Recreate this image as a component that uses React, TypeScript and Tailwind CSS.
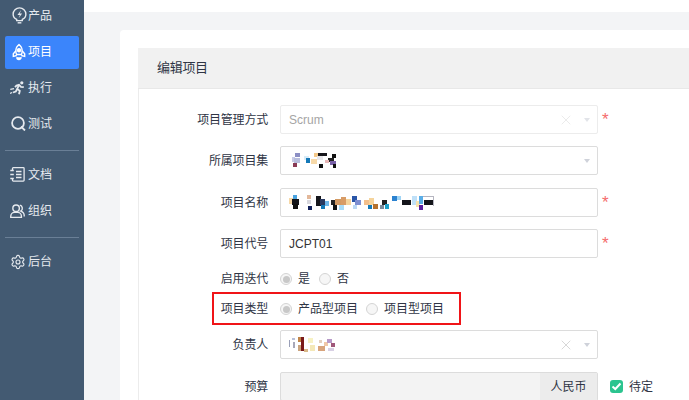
import React from "react";
import { Settings, X } from "lucide-react";

type Cell = [number, number, number, number, string];

const Mosaic = ({ w, h, cells }: { w: number; h: number; cells: Cell[] }) => (
  <svg width={w} height={h} viewBox={`0 0 ${w} ${h}`} className="block shrink-0" shapeRendering="crispEdges">
    {cells.map((c, i) => (
      <rect key={i} x={c[0]} y={c[1]} width={c[2]} height={c[3]} fill={c[4]} />
    ))}
  </svg>
);

const m1: Cell[] = [
  [6, 0, 5, 4, "#8c8fc4"], [3, 4, 3, 5, "#c9cde8"], [5, 5, 6, 5, "#b8bedd"], [4, 10, 4, 4, "#8a3a55"],
  [15, 3, 5, 4, "#d9ecf8"], [17, 5, 4, 5, "#1479b8"], [22, 6, 6, 5, "#f7d9a8"], [25, 0, 5, 4, "#f5c98a"],
  [29, 0, 9, 3, "#16171c"], [28, 3, 6, 4, "#e8e8ec"], [30, 11, 4, 4, "#111"], [43, 1, 4, 4, "#111"],
  [39, 5, 6, 4, "#222"], [41, 8, 6, 4, "#7a62a8"], [44, 11, 3, 4, "#111"], [36, 7, 4, 3, "#e9b8b8"],
];
const m2: Cell[] = [
  [0, 3, 5, 6, "#f7d9a8"], [4, 0, 4, 4, "#4aa3df"], [3, 4, 7, 6, "#14151a"], [4, 9, 5, 5, "#111"],
  [18, 0, 4, 4, "#e3b89a"], [18, 5, 4, 4, "#d7d7dd"], [19, 11, 4, 4, "#10205a"],
  [27, 1, 5, 10, "#16171c"], [31, 4, 5, 6, "#2a3a60"], [36, 6, 4, 5, "#70b8ea"], [32, 10, 4, 4, "#1479b8"],
  [42, 5, 5, 5, "#222"], [44, 9, 4, 6, "#111"], [46, 4, 7, 6, "#d39a63"], [52, 2, 5, 8, "#d89c66"], [50, 10, 5, 5, "#a8dcf8"],
  [57, 4, 5, 6, "#f5d49c"], [63, 1, 5, 6, "#2a56a8"], [66, 5, 6, 5, "#7e8ed0"], [64, 10, 4, 4, "#bcd8f4"],
  [75, 5, 6, 5, "#f3bf8c"], [80, 3, 5, 7, "#f5d49c"], [79, 10, 4, 4, "#1479b8"], [84, 9, 5, 5, "#b5722e"],
  [93, 5, 5, 5, "#222"], [96, 9, 4, 5, "#1da0c8"], [91, 10, 4, 4, "#7a8a9a"],
  [103, 1, 5, 5, "#2b82d0"], [108, 1, 4, 4, "#9fd4f5"], [113, 5, 9, 5, "#14151a"],
  [123, 1, 5, 9, "#bfe0f8"], [127, 6, 4, 6, "#f7e2b0"], [130, 1, 4, 8, "#5aaee8"], [130, 10, 4, 5, "#5a1fa0"],
  [134, 1, 10, 1, "#b5b5c0"], [135, 5, 10, 5, "#14151a"], [144, 1, 1, 10, "#b5b5c0"],
];
const m3: Cell[] = [
  [0, 3, 1, 7, "#9aa0b8"], [3, 1, 3, 2, "#b8c0d8"], [4, 5, 2, 6, "#a8a8b8"], [9, 0, 3, 5, "#c08448"], [12, 0, 3, 14, "#7a1a1a"], [9, 8, 3, 6, "#caa47e"],
  [15, 12, 4, 3, "#d9b888"], [19, 1, 5, 5, "#f7f2c4"], [21, 8, 5, 6, "#f4e8b8"], [30, 3, 3, 3, "#e3d0c0"], [29, 9, 7, 5, "#d8a47c"], [35, 5, 4, 4, "#f0c8a8"],
  [38, 2, 5, 4, "#b79ac8"], [42, 6, 4, 4, "#a0587a"], [39, 11, 6, 3, "#d8d0e4"],
];

const BulbIcon = () => (
  <svg width="15" height="17" viewBox="0 0 16 18" fill="none" stroke="currentColor" strokeWidth="1.500" className="block shrink-0 ml-[2px]">
    <path d="M5 13.200C2.700 12.100 1.200 10 1.200 7.700a6.800 6.800 0 0 1 13.600 0c0 2.300-1.500 4.400-3.800 5.500v1.300H5z" />
    <path d="M6 16.800h4" />
    <path d="M9.800 3.200 5.800 8.400h2.600l-1.400 3.400 3.800-5H8.200z" fill="currentColor" stroke="none" />
  </svg>
);
const RocketIcon = () => (
  <svg width="14" height="18" viewBox="0 0 16 19" fill="none" stroke="currentColor" strokeWidth="1.600" className="block shrink-0 ml-[2px]">
    <path d="M8 1C5.400 3 4.400 5.800 4.400 8.400c0 1.500.3 2.800.8 4h5.600c.5-1.200.8-2.500.8-4C11.600 5.800 10.600 3 8 1z" />
    <path d="M4.500 8 1.500 11.500 1.500 14.500 5.500 13.500M11.500 8l3 3.500v3l-4-1" />
    <circle cx="8" cy="7.500" r="1.700" fill="currentColor" />
    <path d="M5.500 15.500a2.500 2.500 0 0 0 5 0" fill="currentColor" />
  </svg>
);
const RunnerIcon = () => (
  <svg width="15" height="14" viewBox="0 0 15 14" fill="none" stroke="currentColor" strokeWidth="1.800" className="block shrink-0">
    <circle cx="11.800" cy="1.800" r="1.600" fill="currentColor" stroke="none" />
    <path d="M13.800 6.200 11 5.800 9 3.800 6.500 4.600 5 6.200" />
    <path d="M9 3.800 7.200 8 9.800 9.800 9 13.200" />
    <path d="M7.200 8 5.800 10.500 3 11.500" />
    <path d="M0.300 8.400 4 7.600M0 12.400 2.200 11.400" strokeWidth="1.100" />
  </svg>
);
const SearchIcon = () => (
  <svg width="15" height="15" viewBox="0 0 15 15" fill="none" stroke="currentColor" strokeWidth="1.800" className="block shrink-0 ml-[1px]">
    <circle cx="7" cy="7" r="5.900" />
    <path d="M10 10.500 14 14.500" />
  </svg>
);
const DocIcon = () => (
  <svg width="15" height="15" viewBox="0 0 15 15" fill="none" stroke="currentColor" strokeWidth="1.300" className="block shrink-0">
    <path d="M2.500 3V1.500a.8.8 0 0 1 .8-.8h10a.8.8 0 0 1 .8.800v11.800a.8.8 0 0 1-.8.800h-10a.8.8 0 0 1-.8-.8V12" />
    <path d="M.3 3.500h3.500M.3 7.500h3.500M.3 11.500h3.500M6 4.500h5.500M6 7.500h5.500M6 10.500h5.500" />
  </svg>
);
const UserIcon = () => (
  <svg width="15" height="14" viewBox="0 0 16 15" fill="none" stroke="currentColor" strokeWidth="1.500" className="block shrink-0">
    <circle cx="6.500" cy="4.500" r="3.500" />
    <path d="M.8 14.300v-1.300c0-2.400 2-4 4-4h3.400c2 0 4 1.600 4 4v1.300z" />
    <path d="M10.500 1.200a3.500 3.500 0 0 1 1 6.400c2 .7 3.700 2.600 3.700 4.900v.8" />
  </svg>
);

const Item = ({ icon, text, active }: { icon: React.ReactNode; text: string; active?: boolean }) => (
  <div
    className={`h-[33px] mb-[3px] pb-[2px] flex items-center pl-[5px] rounded-[2px] text-[12px] ${
      active ? "bg-[#3b85fb] text-white" : "text-[#e6eaef]"
    }`}
  >
    <span className="w-[18px] flex justify-start">{icon}</span>
    <span>{text}</span>
  </div>
);

const Row = ({ label, children, h = 29, mb = 12, star }: { label: string; children: React.ReactNode; h?: number; mb?: number; star?: boolean }) => (
  <div className="flex items-center" style={{ height: h, marginBottom: mb }}>
    <div className="w-[129px] text-right text-[12px] tracking-[-0.2px] text-[#2f3545] shrink-0">{label}</div>
    <div className="ml-[12px] flex items-center">
      {children}
      {star && <span className="ml-[4px] h-[14px] text-[#f56c6c] text-[17px] leading-[20px] font-['Liberation_Sans'] -translate-y-[3px]">*</span>}
    </div>
  </div>
);

const Caret = ({ light }: { light?: boolean }) => (
  <span className={`w-0 h-0 border-x-[3.500px] border-x-transparent border-t-[4px] ${light ? "border-t-[#e2e4e9]" : "border-t-[#cfd2da]"}`} />
);

const Box = ({ children, disabled, right }: { children?: React.ReactNode; disabled?: boolean; right?: React.ReactNode }) => (
  <div className={`w-[318px] h-[29px] rounded-[2px] border flex items-center pl-[8px] pr-[7px] bg-white ${disabled ? "border-[#ececec]" : "border-[#dcdcdc]"}`}>
    <div className="flex-1 flex items-center min-w-0">{children}</div>
    {right}
  </div>
);

const Clear = ({ light }: { light?: boolean }) => (
  <X size={16} strokeWidth={1.100} className={light ? "text-[#e4e4e4]" : "text-[#c8c8c8]"} />
);

const Radio = ({ on }: { on?: boolean }) => (
  <span className="w-[12px] h-[12px] rounded-full border border-[#d4d4d4] bg-[#f6f6f6] flex items-center justify-center shrink-0">
    {on && <span className="w-[7px] h-[7px] rounded-full bg-[#c8c8c8]" />}
  </span>
);

export default function App() {
  return (
    <div className="w-[689px] h-[400px] overflow-hidden flex bg-white font-['Liberation_Sans','Noto_Sans_CJK_SC',sans-serif]">
      <aside className="w-[84px] h-full bg-[#435a72] shrink-0 px-[5px]">
        <Item icon={<BulbIcon />} text="产品" />
        <Item icon={<RocketIcon />} text="项目" active />
        <Item icon={<RunnerIcon />} text="执行" />
        <Item icon={<SearchIcon />} text="测试" />
        <div className="h-px bg-[#6a7f96] mt-[9px] mb-[8px]" />
        <Item icon={<DocIcon />} text="文档" />
        <Item icon={<UserIcon />} text="组织" />
        <div className="h-px bg-[#6a7f96] mt-[9px] mb-[8px]" />
        <Item icon={<Settings size={16} strokeWidth={1.700} />} text="后台" />
      </aside>
      <main className="flex-1 min-w-0 pt-[12px]">
        <div className="h-[388px] bg-[#f3f4f6] pl-[36px] pt-[18px]">
          <div className="h-[370px] w-[569px] bg-white rounded-tl-[4px] pl-[18px] pt-[18px]">
            <div className="h-[352px] border-l border-[#ececec]">
              <div className="h-[41px] bg-[#f1f1f1] border-b border-[#e8e8e8] -ml-px pl-[19px] flex items-center text-[13px] tracking-[-0.3px] text-[#2f3545]">
                编辑项目
              </div>
              <div className="pt-[16px]">
                <Row label="项目管理方式" star mb={12}>
                  <Box disabled right={
                    <div className="flex items-center gap-[10px]">
                      <Clear light />
                      <Caret light />
                    </div>
                  }>
                    <span className="text-[12px] text-[#a5a5a5]">Scrum</span>
                  </Box>
                </Row>
                <Row label="所属项目集" mb={13}>
                  <Box right={<Caret />}>
                    <Mosaic w={48} h={16} cells={m1} />
                  </Box>
                </Row>
                <Row label="项目名称" star mb={12}>
                  <Box>
                    <Mosaic w={146} h={15} cells={m2} />
                  </Box>
                </Row>
                <Row label="项目代号" star mb={9}>
                  <Box>
                    <span className="text-[12px] text-[#333]">JCPT01</span>
                  </Box>
                </Row>
                <Row label="启用迭代" h={24} mb={6}>
                  <Radio on />
                  <span className="ml-[6px] text-[12px] text-[#2f3545]">是</span>
                  <span className="ml-[9px]"><Radio /></span>
                  <span className="ml-[6px] text-[12px] text-[#2f3545]">否</span>
                </Row>
                <div className="relative">
                  <Row label="项目类型" h={24} mb={9}>
                    <Radio on />
                    <span className="ml-[6px] text-[12px] text-[#2f3545]">产品型项目</span>
                    <span className="ml-[8px]"><Radio /></span>
                    <span className="ml-[6px] text-[12px] text-[#2f3545]">项目型项目</span>
                  </Row>
                  <div className="absolute left-[73px] top-[-5px] w-[249px] h-[33px] border-2 border-[#f01418]" />
                </div>
                <Row label="负责人" mb={13}>
                  <Box right={
                    <div className="flex items-center gap-[10px]">
                      <Clear />
                      <Caret />
                    </div>
                  }>
                    <Mosaic w={48} h={16} cells={m3} />
                  </Box>
                </Row>
                <Row label="预算">
                  <div className="w-[318px] h-[29px] rounded-[2px] border border-[#dcdcdc] bg-[#f3f3f3] flex justify-end">
                    <div className="w-[57px] bg-[#ececec] text-[12px] text-[#2f3545] flex items-center justify-center">人民币</div>
                  </div>
                  <span className="ml-[12px] w-[13px] h-[13px] rounded-[3px] bg-[#2bc48f] flex items-center justify-center shrink-0">
                    <svg width="11" height="9" viewBox="0 0 11 9" fill="none" stroke="white" strokeWidth="2" className="block">
                      <path d="M1.500 4.500 4.300 7 9.500 1.500" />
                    </svg>
                  </span>
                  <span className="ml-[6px] text-[12px] text-[#2f3545]">待定</span>
                </Row>
              </div>
            </div>
          </div>
        </div>
      </main>
    </div>
  );
}
